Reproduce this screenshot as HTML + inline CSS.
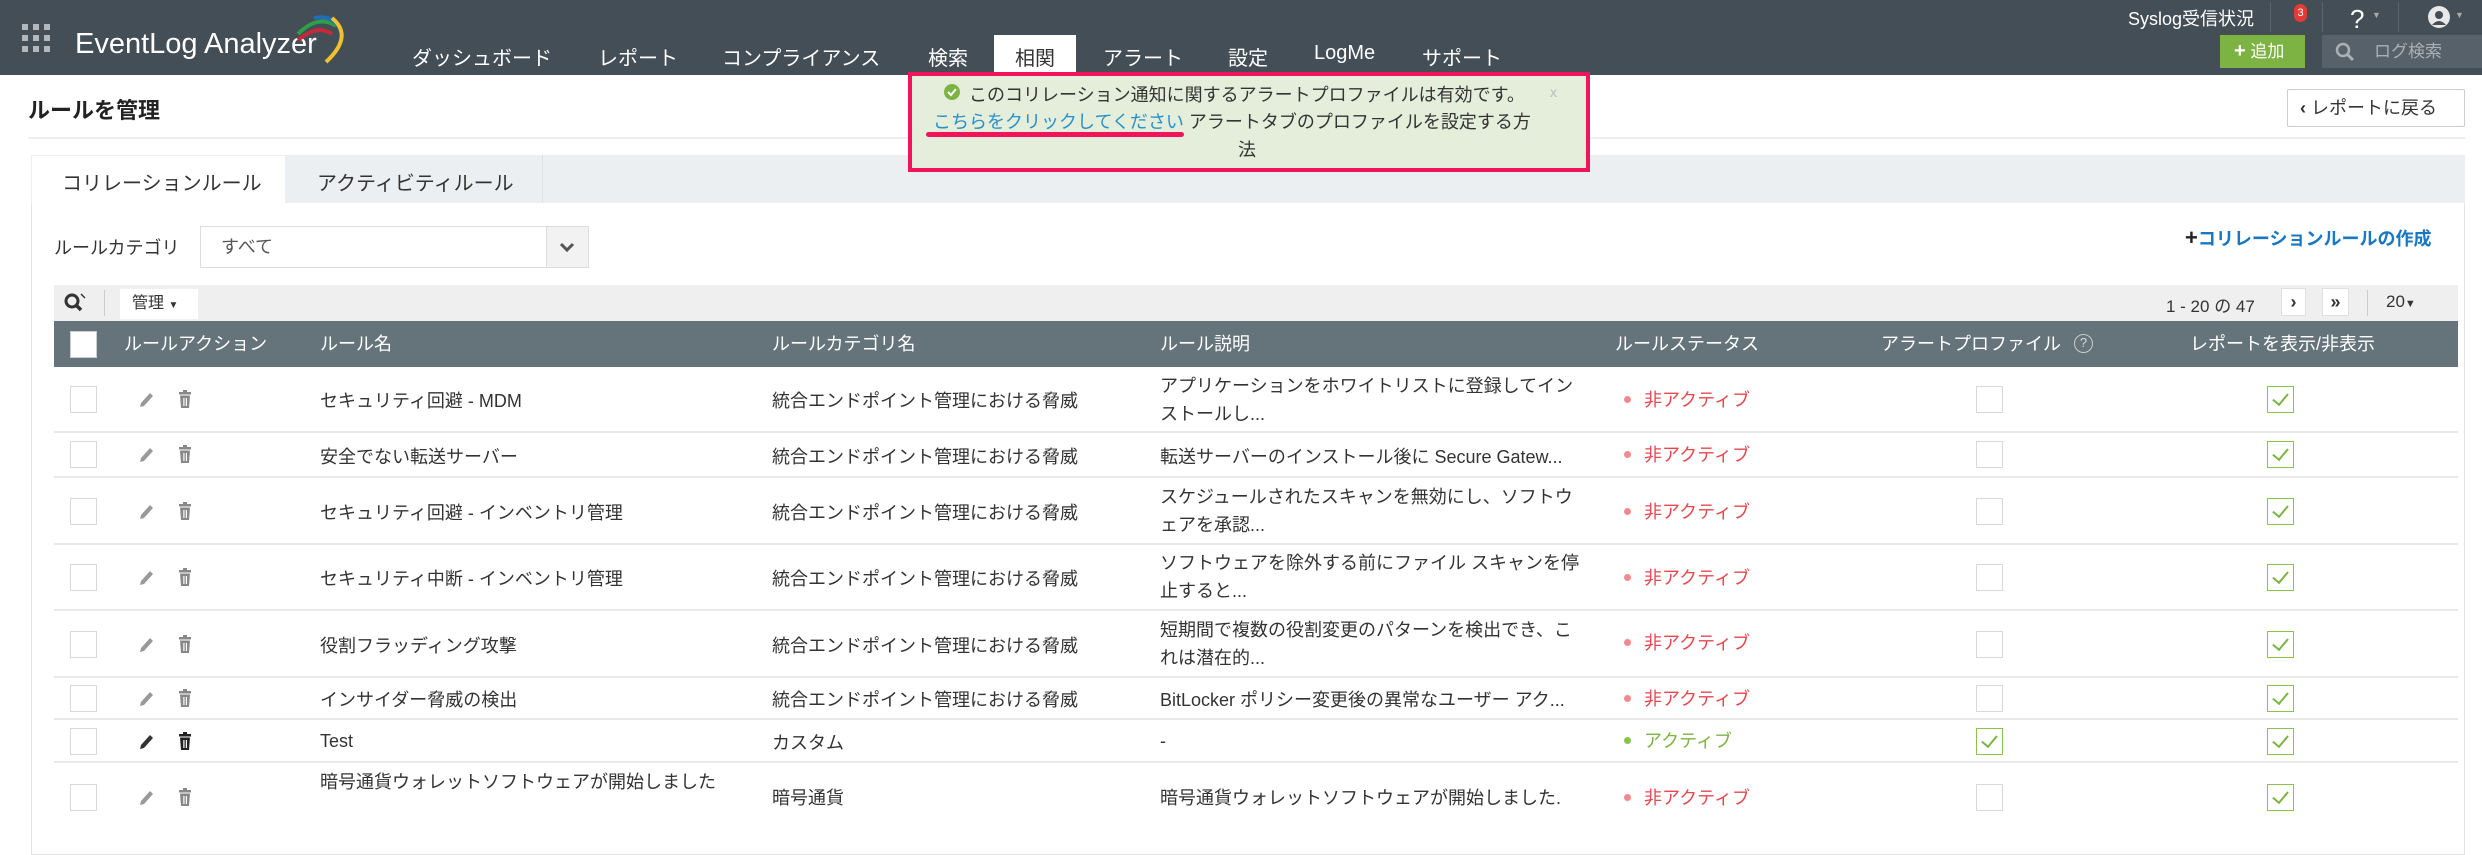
<!DOCTYPE html>
<html><head><meta charset="utf-8">
<style>
*{box-sizing:border-box;margin:0;padding:0}
body{width:2482px;height:830px;overflow:hidden;background:#fff;font-family:"Liberation Sans","Noto Sans CJK JP",sans-serif;color:#333;position:relative}
.a{position:absolute;white-space:nowrap}
.hdr{position:absolute;left:0;top:0;width:2482px;height:75px;background:#434e56}
.nav{position:absolute;top:42px;font-size:20px;color:#fff}
.cb{position:absolute;width:27px;height:27px;border:1px solid #d8d8d8;background:#fff}
.ck{position:absolute;width:27px;height:27px;border:1px solid #8bc34a;background:#fff}
.ck:after{content:"";position:absolute;left:8px;top:3px;width:7px;height:13px;border-right:2px solid #7cb342;border-bottom:2px solid #7cb342;transform:rotate(40deg)}
.cell{position:absolute;font-size:18px;color:#333;display:flex;align-items:center;white-space:nowrap}
.row{position:absolute;left:54px;width:2404px;border-bottom:2px solid #e8e8e8}
.st{position:absolute;font-size:18px;color:#e8474e;display:flex;align-items:center}
.st:before{content:"";width:7px;height:7px;border-radius:50%;background:#f08a8f;margin-right:13px}
.st.g{color:#7cb342}.st.g:before{background:#8bc34a}
.th{position:absolute;top:321px;height:46px;line-height:46px;font-size:18px;color:#fff}
.d{position:absolute;left:1160px;font-size:18px;line-height:28px}
</style></head><body>
<div class="hdr"></div>
<svg class="a" style="left:22px;top:24px" width="28" height="28"><g fill="#b4b8bb"><rect x="0" y="0" width="6" height="6"/><rect x="11" y="0" width="6" height="6"/><rect x="22" y="0" width="6" height="6"/><rect x="0" y="11" width="6" height="6"/><rect x="11" y="11" width="6" height="6"/><rect x="22" y="11" width="6" height="6"/><rect x="0" y="22" width="6" height="6"/><rect x="11" y="22" width="6" height="6"/><rect x="22" y="22" width="6" height="6"/></g></svg>
<div class="a" style="left:75px;top:28px;font-size:29px;color:#fff">EventLog Analyzer</div>
<svg class="a" style="left:292px;top:12px" width="60" height="52"><path d="M6 22 Q26 2 44 14" stroke="#2e9e48" stroke-width="4" fill="none"/><path d="M6 28 Q26 12 40 22" stroke="#c62a3a" stroke-width="4" fill="none"/><path d="M22 6 Q46 2 50 24" stroke="#1f6db5" stroke-width="4" fill="none"/><path d="M40 6 Q62 24 34 50" stroke="#f2c12e" stroke-width="4" fill="none"/></svg>
<div class="nav" style="left:412px">ダッシュボード</div>
<div class="nav" style="left:598px">レポート</div>
<div class="nav" style="left:722px">コンプライアンス</div>
<div class="nav" style="left:928px">検索</div>
<div class="a" style="left:994px;top:35px;width:82px;height:40px;background:#fff"></div>
<div class="nav" style="left:1015px;color:#333">相関</div>
<div class="nav" style="left:1103px">アラート</div>
<div class="nav" style="left:1228px">設定</div>
<div class="nav" style="left:1314px">LogMe</div>
<div class="nav" style="left:1422px">サポート</div>
<div class="a" style="left:2128px;top:5px;font-size:18px;color:#fff">Syslog受信状況</div>
<div class="a" style="left:2270px;top:2px;width:1px;height:30px;background:#5a656c"></div>
<div class="a" style="left:2294px;top:4px;width:13px;height:18px;border-radius:7px;background:#e53935;color:#fff;font-size:11px;text-align:center;line-height:18px">3</div>
<div class="a" style="left:2322px;top:2px;width:1px;height:30px;background:#5a656c"></div>
<div class="a" style="left:2350px;top:4px;font-size:26px;color:#fff">?</div>
<div class="a" style="left:2372px;top:10px;font-size:9px;color:#aaa">▼</div>
<div class="a" style="left:2398px;top:2px;width:1px;height:30px;background:#5a656c"></div>
<div class="a" style="left:2428px;top:6px;width:22px;height:22px;border-radius:50%;background:#e8e8e8"></div>
<svg class="a" style="left:2428px;top:6px" width="22" height="22"><circle cx="11" cy="9" r="4" fill="#434e56"/><path d="M4 19 Q11 11 18 19" fill="#434e56"/></svg>
<div class="a" style="left:2455px;top:10px;font-size:9px;color:#aaa">▼</div>
<div class="a" style="left:2220px;top:35px;width:85px;height:33px;background:#7cb342;color:#fff;font-size:17px;line-height:33px;padding-left:14px"><b style="font-size:20px">+</b> 追加</div>
<div class="a" style="left:2322px;top:35px;width:160px;height:33px;background:#56616a;color:#aab1b6;font-size:17px;line-height:33px;padding-left:52px">ログ検索</div>
<svg class="a" style="left:2335px;top:42px" width="20" height="20"><circle cx="8" cy="8" r="6" stroke="#aab1b6" stroke-width="2.5" fill="none"/><line x1="12" y1="12" x2="18" y2="18" stroke="#aab1b6" stroke-width="3"/></svg>

<div class="a" style="left:28px;top:93px;font-size:22px;font-weight:bold;color:#222">ルールを管理</div>
<div class="a" style="left:28px;top:137px;width:2437px;height:2px;background:#eee"></div>
<div class="a" style="left:2287px;top:89px;width:178px;height:38px;border:1px solid #ccc;border-radius:2px;font-size:18px;line-height:36px;padding-left:12px;background:#fff"><span style="font-weight:bold">‹</span> レポートに戻る</div>

<div class="a" style="left:31px;top:155px;width:2434px;height:700px;border:1px solid #e4e4e4"></div>
<div class="a" style="left:31px;top:155px;width:2434px;height:48px;background:#eceff1"></div>
<div class="a" style="left:32px;top:156px;width:253px;height:48px;background:#fff"></div>
<div class="a" style="left:285px;top:155px;width:258px;height:48px;border-right:1px solid #dfe2e4"></div>
<div class="a" style="left:62px;top:167px;font-size:20px;color:#333">コリレーションルール</div>
<div class="a" style="left:317px;top:167px;font-size:20px;color:#333">アクティビティルール</div>

<div class="a" style="left:54px;top:234px;font-size:18px">ルールカテゴリ</div>
<div class="a" style="left:200px;top:226px;width:389px;height:42px;border:1px solid #ddd;background:#fff;font-size:18px;line-height:40px;padding-left:20px;color:#555">すべて</div>
<div class="a" style="left:546px;top:227px;width:42px;height:40px;background:#f2f2f2;border-left:1px solid #ddd"></div>
<svg class="a" style="left:559px;top:241px" width="16" height="12"><path d="M2 3 L8 9 L14 3" stroke="#555" stroke-width="3" fill="none"/></svg>
<div class="a" style="left:2185px;top:225px;font-size:18px;color:#1a78c2;font-weight:bold"><span style="color:#222;font-size:22px">+</span>コリレーションルールの作成</div>

<div class="a" style="left:54px;top:285px;width:2404px;height:36px;background:#efefef"></div>
<svg class="a" style="left:64px;top:293px" width="22" height="20"><circle cx="8" cy="8" r="6" stroke="#333" stroke-width="3" fill="none"/><line x1="12" y1="12" x2="17" y2="17" stroke="#333" stroke-width="3.5"/><line x1="17" y1="1" x2="21" y2="5" stroke="#333" stroke-width="1.5"/></svg>
<div class="a" style="left:104px;top:290px;width:1px;height:26px;background:#ccc"></div>
<div class="a" style="left:120px;top:289px;width:78px;height:30px;background:#fff;font-size:16px;line-height:30px;padding-left:12px">管理 <span style="font-size:10px">▼</span></div>
<div class="a" style="left:2166px;top:292px;font-size:17px">1 - 20 の 47</div>
<div class="a" style="left:2281px;top:288px;width:25px;height:28px;background:#fff;border:1px solid #e0e0e0;text-align:center;font-weight:bold;font-size:18px;line-height:26px">›</div>
<div class="a" style="left:2322px;top:288px;width:27px;height:28px;background:#fff;border:1px solid #e0e0e0;text-align:center;font-weight:bold;font-size:18px;line-height:26px">»</div>
<div class="a" style="left:2367px;top:290px;width:1px;height:26px;background:#ccc"></div>
<div class="a" style="left:2386px;top:292px;font-size:17px">20<span style="font-size:11px">▼</span></div>

<div class="a" style="left:54px;top:321px;width:2404px;height:46px;background:#65737b"></div>
<div class="a" style="left:70px;top:331px;width:27px;height:27px;background:#fff;border:1px solid #ccc"></div>
<div class="th" style="left:124px">ルールアクション</div>
<div class="th" style="left:320px">ルール名</div>
<div class="th" style="left:772px">ルールカテゴリ名</div>
<div class="th" style="left:1160px">ルール説明</div>
<div class="th" style="left:1615px">ルールステータス</div>
<div class="th" style="left:1881px">アラートプロファイル</div>
<div class="a" style="left:2074px;top:334px;width:19px;height:19px;border:1.5px solid #ccc;border-radius:50%;color:#ddd;font-size:13px;text-align:center;line-height:16px">?</div>
<div class="th" style="left:2190px">レポートを表示/非表示</div>

<svg width="0" height="0" style="position:absolute"><defs>
<g id="pen"><path d="M2 16 L3 12 L12 2 L15 5 L6 15 Z" fill="currentColor"/></g>
<g id="bin"><rect x="2" y="2" width="12" height="2.5" fill="currentColor"/><rect x="6" y="0" width="4" height="2" fill="currentColor"/><path d="M3 5.5 H13 L12 18 H4 Z" fill="currentColor"/><rect x="6.3" y="8" width="1.2" height="8" fill="#fff"/><rect x="8.8" y="8" width="1.2" height="8" fill="#fff"/></g>
</defs></svg>

<div class="row" style="top:367px;height:66px"></div>
<div class="cb" style="left:70px;top:386px"></div>
<svg class="a" style="left:138px;top:391px;color:#999" width="18" height="18"><use href="#pen"/></svg><svg class="a" style="left:177px;top:390px;color:#888" width="16" height="19"><use href="#bin"/></svg>
<div class="cell" style="left:320px;top:367px;height:66px">セキュリティ回避 - MDM</div>
<div class="cell" style="left:772px;top:367px;height:66px">統合エンドポイント管理における脅威</div>
<div class="d" style="top:372px">アプリケーションをホワイトリストに登録してイン<br>ストールし...</div>
<div class="st" style="left:1624px;top:385px;height:28px">非アクティブ</div>
<div class="cb" style="left:1976px;top:386px"></div><div class="ck" style="left:2267px;top:386px"></div>

<div class="row" style="top:433px;height:45px"></div>
<div class="cb" style="left:70px;top:441px"></div>
<svg class="a" style="left:138px;top:446px;color:#999" width="18" height="18"><use href="#pen"/></svg><svg class="a" style="left:177px;top:445px;color:#888" width="16" height="19"><use href="#bin"/></svg>
<div class="cell" style="left:320px;top:433px;height:45px">安全でない転送サーバー</div>
<div class="cell" style="left:772px;top:433px;height:45px">統合エンドポイント管理における脅威</div>
<div class="cell" style="left:1160px;top:433px;height:45px">転送サーバーのインストール後に Secure Gatew...</div>
<div class="st" style="left:1624px;top:440px;height:28px">非アクティブ</div>
<div class="cb" style="left:1976px;top:441px"></div><div class="ck" style="left:2267px;top:441px"></div>

<div class="row" style="top:478px;height:67px"></div>
<div class="cb" style="left:70px;top:498px"></div>
<svg class="a" style="left:138px;top:503px;color:#999" width="18" height="18"><use href="#pen"/></svg><svg class="a" style="left:177px;top:502px;color:#888" width="16" height="19"><use href="#bin"/></svg>
<div class="cell" style="left:320px;top:478px;height:67px">セキュリティ回避 - インベントリ管理</div>
<div class="cell" style="left:772px;top:478px;height:67px">統合エンドポイント管理における脅威</div>
<div class="d" style="top:483px">スケジュールされたスキャンを無効にし、ソフトウ<br>ェアを承認...</div>
<div class="st" style="left:1624px;top:497px;height:28px">非アクティブ</div>
<div class="cb" style="left:1976px;top:498px"></div><div class="ck" style="left:2267px;top:498px"></div>

<div class="row" style="top:545px;height:66px"></div>
<div class="cb" style="left:70px;top:564px"></div>
<svg class="a" style="left:138px;top:569px;color:#999" width="18" height="18"><use href="#pen"/></svg><svg class="a" style="left:177px;top:568px;color:#888" width="16" height="19"><use href="#bin"/></svg>
<div class="cell" style="left:320px;top:545px;height:66px">セキュリティ中断 - インベントリ管理</div>
<div class="cell" style="left:772px;top:545px;height:66px">統合エンドポイント管理における脅威</div>
<div class="d" style="top:549px">ソフトウェアを除外する前にファイル スキャンを停<br>止すると...</div>
<div class="st" style="left:1624px;top:563px;height:28px">非アクティブ</div>
<div class="cb" style="left:1976px;top:564px"></div><div class="ck" style="left:2267px;top:564px"></div>

<div class="row" style="top:611px;height:67px"></div>
<div class="cb" style="left:70px;top:631px"></div>
<svg class="a" style="left:138px;top:636px;color:#999" width="18" height="18"><use href="#pen"/></svg><svg class="a" style="left:177px;top:635px;color:#888" width="16" height="19"><use href="#bin"/></svg>
<div class="cell" style="left:320px;top:611px;height:67px">役割フラッディング攻撃</div>
<div class="cell" style="left:772px;top:611px;height:67px">統合エンドポイント管理における脅威</div>
<div class="d" style="top:616px">短期間で複数の役割変更のパターンを検出でき、こ<br>れは潜在的...</div>
<div class="st" style="left:1624px;top:628px;height:28px">非アクティブ</div>
<div class="cb" style="left:1976px;top:631px"></div><div class="ck" style="left:2267px;top:631px"></div>

<div class="row" style="top:678px;height:42px"></div>
<div class="cb" style="left:70px;top:685px"></div>
<svg class="a" style="left:138px;top:690px;color:#999" width="18" height="18"><use href="#pen"/></svg><svg class="a" style="left:177px;top:689px;color:#888" width="16" height="19"><use href="#bin"/></svg>
<div class="cell" style="left:320px;top:678px;height:42px">インサイダー脅威の検出</div>
<div class="cell" style="left:772px;top:678px;height:42px">統合エンドポイント管理における脅威</div>
<div class="cell" style="left:1160px;top:678px;height:42px">BitLocker ポリシー変更後の異常なユーザー アク...</div>
<div class="st" style="left:1624px;top:684px;height:28px">非アクティブ</div>
<div class="cb" style="left:1976px;top:685px"></div><div class="ck" style="left:2267px;top:685px"></div>

<div class="row" style="top:720px;height:43px"></div>
<div class="cb" style="left:70px;top:728px"></div>
<svg class="a" style="left:138px;top:733px;color:#333" width="18" height="18"><use href="#pen"/></svg><svg class="a" style="left:177px;top:732px;color:#222" width="16" height="19"><use href="#bin"/></svg>
<div class="cell" style="left:320px;top:720px;height:43px">Test</div>
<div class="cell" style="left:772px;top:720px;height:43px">カスタム</div>
<div class="cell" style="left:1160px;top:720px;height:43px">-</div>
<div class="st g" style="left:1624px;top:726px;height:28px">アクティブ</div>
<div class="ck" style="left:1976px;top:728px"></div><div class="ck" style="left:2267px;top:728px"></div>

<div class="cb" style="left:70px;top:784px"></div>
<svg class="a" style="left:138px;top:789px;color:#999" width="18" height="18"><use href="#pen"/></svg><svg class="a" style="left:177px;top:788px;color:#888" width="16" height="19"><use href="#bin"/></svg>
<div class="a" style="left:320px;top:768px;font-size:18px">暗号通貨ウォレットソフトウェアが開始しました</div>
<div class="cell" style="left:772px;top:783px;height:28px">暗号通貨</div>
<div class="cell" style="left:1160px;top:783px;height:28px">暗号通貨ウォレットソフトウェアが開始しました.</div>
<div class="st" style="left:1624px;top:783px;height:28px">非アクティブ</div>
<div class="cb" style="left:1976px;top:784px"></div><div class="ck" style="left:2267px;top:784px"></div>

<div class="a" style="left:908px;top:72px;width:682px;height:100px;border:4px solid #f0145a;background:#e4eedb"></div>
<svg class="a" style="left:943px;top:83px" width="18" height="18"><circle cx="9" cy="9" r="8" fill="#7cb342"/><path d="M5 9 L8 12 L13 6" stroke="#fff" stroke-width="2" fill="none"/></svg>
<div class="a" style="left:969px;top:81px;font-size:18px;color:#333">このコリレーション通知に関するアラートプロファイルは有効です。</div>
<div class="a" style="left:1550px;top:84px;font-size:14px;color:#bbb">x</div>
<div class="a" style="left:933px;top:108px;font-size:18px;color:#333"><span style="color:#2a8fc9">こちらをクリックしてください</span> アラートタブのプロファイルを設定する方</div>
<div class="a" style="left:926px;top:132px;width:258px;height:5px;border-radius:3px;background:#f0145a"></div>
<div class="a" style="left:1238px;top:136px;font-size:18px;color:#333">法</div>
</body></html>
